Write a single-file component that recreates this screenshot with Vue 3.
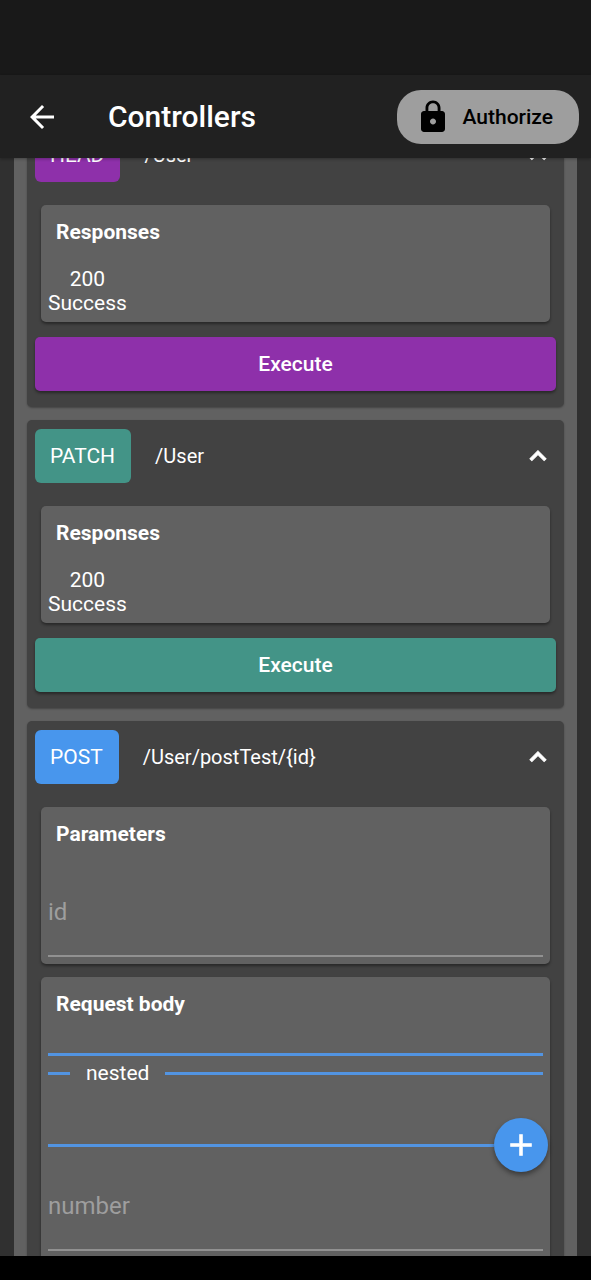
<script setup>
import { onMounted, ref } from 'vue'

const scroller = ref(null)

const endpoints = ref([
  { method: 'HEAD', path: '/User', tone: 'head', open: true, responses: [{ code: 200, text: 'Success' }] },
  { method: 'PATCH', path: '/User', tone: 'patch', open: true, responses: [{ code: 200, text: 'Success' }] },
  { method: 'POST', path: '/User/postTest/{id}', tone: 'post', open: true, parameters: ['id'], nested: 'nested', fields: ['number'] },
])

onMounted(() => {
  scroller.value.scrollTop = 52
})
</script>

<template>
  <div class="screen">
    <div class="status-bar"></div>
    <header class="app-bar">
      <button class="back" type="button" aria-label="Back">
        <svg viewBox="0 0 24 24"><path d="M20 11H7.83l5.59-5.59L12 4l-8 8 8 8 1.41-1.41L7.83 13H20v-2z" /></svg>
      </button>
      <h1>Controllers</h1>
      <button class="authorize" type="button">
        <svg viewBox="0 0 24 24"><path d="M18 8h-1V6c0-2.76-2.24-5-5-5S7 3.24 7 6v2H6c-1.1 0-2 .9-2 2v10c0 1.1.9 2 2 2h12c1.1 0 2-.9 2-2V10c0-1.1-.9-2-2-2zm-6 9c-1.1 0-2-.9-2-2s.9-2 2-2 2 .9 2 2-.9 2-2 2zm3.1-9H8.9V6c0-1.71 1.39-3.1 3.1-3.1s3.1 1.39 3.1 3.1v2z" /></svg>
        Authorize
      </button>
    </header>

    <main ref="scroller" class="scroller">
      <div class="panel">
        <article v-for="e in endpoints" :key="e.method" class="card" :class="e.tone">
          <div class="card-head">
            <span class="method">{{ e.method }}</span>
            <span class="path">{{ e.path }}</span>
            <button class="toggle" type="button" aria-label="Toggle details" :aria-expanded="e.open" @click="e.open = !e.open">
              <svg viewBox="0 0 24 24"><path d="M12 8l-6 6 1.41 1.41L12 10.83l4.59 4.58L18 14z" /></svg>
            </button>
          </div>

          <template v-if="e.open">
            <section v-if="e.responses" class="box">
              <h2>Responses</h2>
              <div v-for="r in e.responses" :key="r.code" class="response">
                <span>{{ r.code }}</span>
                <span>{{ r.text }}</span>
              </div>
            </section>
            <button v-if="e.responses" class="execute" type="button">Execute</button>

            <section v-if="e.parameters" class="box">
              <h2>Parameters</h2>
              <input v-for="p in e.parameters" :key="p" class="field" type="text" :placeholder="p" :aria-label="p" />
            </section>

            <section v-if="e.fields" class="box body-box">
              <h2>Request body</h2>
              <div class="rule first"></div>
              <div class="legend">
                <div class="rule lead"></div>
                <span>{{ e.nested }}</span>
                <div class="rule grow"></div>
              </div>
              <div class="add-row">
                <div class="rule grow"></div>
                <button class="add" type="button" aria-label="Add item">
                  <svg viewBox="0 0 24 24"><path d="M19 13h-6v6h-2v-6H5v-2h6V5h2v6h6v2z" /></svg>
                </button>
              </div>
              <input v-for="f in e.fields" :key="f" class="field" type="text" :placeholder="f" :aria-label="f" />
            </section>
          </template>
        </article>
      </div>
    </main>
    <div class="nav-bar"></div>
  </div>
</template>

<style>
body {
  background: #000;
}
</style>

<style scoped>
* {
  box-sizing: border-box;
}
.screen {
  display: flex;
  flex-direction: column;
  height: 100vh;
  background: #303030;
  color: #fff;
  font-family: Roboto, sans-serif;
  font-size: 21px;
  line-height: 24px;
}
button {
  border: 0;
  padding: 0;
  font: inherit;
  color: inherit;
  background: none;
  cursor: pointer;
}
svg {
  display: block;
  fill: currentColor;
}
.status-bar {
  flex: none;
  height: 75px;
  background: #191919;
}
.app-bar {
  position: relative;
  z-index: 1;
  flex: none;
  display: flex;
  align-items: center;
  height: 83px;
  padding: 0 12px 0 24px;
  background: #212121;
  box-shadow: 0 1px 3px rgba(0, 0, 0, 0.3);
}
.back svg,
.authorize svg {
  width: 36px;
  height: 36px;
}
h1 {
  flex: 1;
  margin: 0 0 0 48px;
  font-size: 30px;
  line-height: 36px;
  font-weight: 500;
}
.authorize {
  display: flex;
  align-items: center;
  gap: 12px;
  height: 54px;
  padding: 0 26px 0 18px;
  border-radius: 24px;
  background: #9e9e9e;
  color: #000;
  font-weight: 500;
}
.scroller {
  flex: 1;
  min-height: 0;
  overflow-y: auto;
  scrollbar-width: none;
}
.panel {
  display: flex;
  flex-direction: column;
  gap: 13px;
  margin: 0 14px;
  padding: 13px;
  background: #616161;
}
.card {
  padding: 9px 8px 16px;
  border-radius: 5px;
  background: #424242;
  box-shadow: 0 1px 2px rgba(0, 0, 0, 0.3);
}
.head {
  --tone: #8e30aa;
}
.patch {
  --tone: #439487;
}
.post {
  --tone: #4896ed;
}
.card-head {
  display: flex;
  align-items: center;
  padding-right: 2px;
  margin-bottom: 23px;
}
.method {
  padding: 15px 16px 15px 15px;
  border-radius: 6px;
  background: var(--tone);
}
.path {
  flex: 1;
  margin-left: 24px;
  font-size: 20px;
}
.toggle svg {
  width: 32px;
  height: 32px;
  stroke: currentColor;
  stroke-width: 0.8;
}
.box {
  margin: 0 6px 13px;
  padding: 15px 7px 7px;
  border-radius: 5px;
  background: #616161;
  box-shadow: 0 2px 3px rgba(0, 0, 0, 0.4);
}
h2 {
  margin: 0 0 23px;
  padding-left: 8px;
  font-size: 21px;
  line-height: 24px;
  font-weight: 700;
}
.response {
  display: inline-flex;
  flex-direction: column;
  align-items: center;
  vertical-align: top;
}
.execute {
  display: block;
  width: 100%;
  height: 54px;
  margin-top: 15px;
  border-radius: 5px;
  background: var(--tone);
  box-shadow: 0 2px 3px rgba(0, 0, 0, 0.4);
  font-weight: 500;
}
.field {
  display: block;
  width: 100%;
  height: 88px;
  padding: 0;
  border: 0;
  border-bottom: 2px solid #919191;
  border-radius: 0;
  outline: 0;
  background: none;
  color: #fff;
  font: inherit;
  font-size: 24px;
}
.field::placeholder {
  color: #9e9e9e;
  opacity: 1;
}
.rule {
  height: 3px;
  background: #5294e2;
}
.first {
  margin-top: 37px;
}
.legend {
  display: flex;
  align-items: center;
  gap: 16px;
  margin-top: 5px;
}
.lead {
  width: 22px;
}
.grow {
  flex: 1;
}
.add-row {
  display: flex;
  align-items: center;
  height: 36px;
  margin: 42px -5px 0 0;
}
.add {
  display: grid;
  place-items: center;
  width: 54px;
  height: 54px;
  border-radius: 50%;
  background: var(--tone);
  box-shadow: 0 3px 5px rgba(0, 0, 0, 0.4);
}
.add svg {
  width: 36px;
  height: 36px;
  stroke: currentColor;
  stroke-width: 0.4;
}
.body-box {
  padding-bottom: 80px;
}
.nav-bar {
  flex: none;
  height: 24px;
  background: #000;
}
</style>
